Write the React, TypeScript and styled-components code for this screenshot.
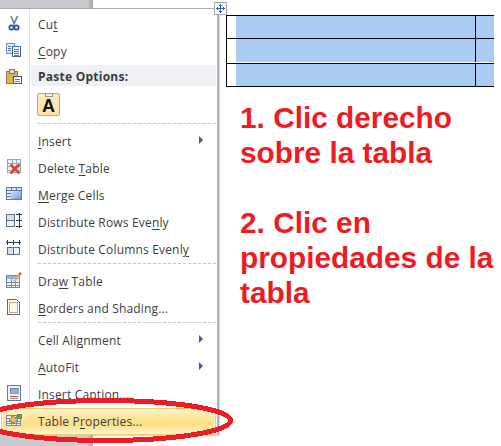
import React from "react";
import styled, { createGlobalStyle } from "styled-components";

const Global = createGlobalStyle`
  html, body { margin: 0; padding: 0; background: #fff; }
`;

const Page = styled.div`
  position: relative;
  display: flex;
  width: 501px;
  height: 446px;
  overflow: hidden;
  background: #fff;
`;

const LeftColumn = styled.div`
  display: flex;
  flex-direction: column;
  width: 220px;
  flex: none;
`;

const WindowStrip = styled.div<{ $h: number }>`
  width: 93px;
  height: ${(p) => p.$h}px;
  flex: none;
  background: linear-gradient(90deg, #c9cbcf 0%, #c9cbcf 94%, #a3a6ab 100%);
`;

const Menu = styled.div`
  flex: none;
  height: 427px;
  box-sizing: border-box;
  width: 219px;
  padding: 2px 1px 0 0;
  background: linear-gradient(90deg, #fff 29px, #e2e3e3 29px, #e2e3e3 30px, #fff 30px);
  border-top: 1px solid #a9abb0;
  border-right: 2px solid #b3b4bb;
  border-bottom: 1px solid #c5c6cb;
  box-shadow: 1px 1px 1px rgba(0, 0, 0, 0.14);
  font-family: "Open Sans", "Noto Sans", sans-serif;
  font-size: 12px;
  color: #3c3c42;
`;

const Row = styled.div<{ $hot?: boolean }>`
  display: grid;
  grid-template-columns: ${(p) => (p.$hot ? "36px" : "38px")} 1fr 17px;
  align-items: center;
  height: 27px;
  box-sizing: border-box;
  ${(p) =>
    p.$hot
      ? `
    border: 1px solid #f2ce73;
    box-shadow: inset 0 0 0 1px #fff3c8;
    background: linear-gradient(180deg, #fdf1c6 0%, #fce596 40%, #fbdf86 62%, #fef4cd 100%);
    margin-left: 1px;
  `
      : ""}
`;

const IconSlot = styled.span<{ $hot?: boolean }>`
  display: flex;
  padding-left: ${(p) => (p.$hot ? 4 : 6)}px;
  margin-bottom: 4px;
`;

const Label = styled.span`
  white-space: nowrap;
  letter-spacing: 0.17px;
  u { text-underline-offset: 2px; text-decoration-thickness: 1px; }
`;

const SubArrow = styled.span`
  justify-self: start;
  width: 0;
  height: 0;
  margin-bottom: 3px;
  border-left: 4px solid #3e5a98;
  border-top: 4px solid transparent;
  border-bottom: 4px solid transparent;
`;

const HeaderRow = styled.div`
  display: grid;
  grid-template-columns: 31px 1fr;
  height: 21px;
  align-items: center;
`;

const HeaderIcon = styled.span`
  display: flex;
  padding: 3px 0 0 6px;
`;

const HeaderBand = styled.div`
  display: flex;
  align-items: center;
  height: 21px;
  box-sizing: border-box;
  padding: 1px 0 0 7px;
  background: #eff0f3;
  font-weight: 700;
  color: #3a3a40;
  letter-spacing: 0.25px;
`;

const PasteRow = styled.div`
  height: 37px;
  padding: 7px 0 0 37px;
  box-sizing: border-box;
`;

const PasteButton = styled.div`
  position: relative;
  width: 23px;
  height: 23px;
  box-sizing: border-box;
  display: flex;
  align-items: center;
  justify-content: center;
  padding-top: 3px;
  background: linear-gradient(180deg, #fdeac4, #fddfa6);
  border: 1px solid #c3a77c;
  border-radius: 2px;
  font-family: "Liberation Sans", sans-serif;
  font-weight: 700;
  font-size: 18px;
  color: #111;
  &::before {
    content: "";
    position: absolute;
    top: -1px;
    left: 7px;
    width: 6px;
    height: 2px;
    background: #f4f1ea;
    border: 1px solid #a59a88;
  }
`;

const Separator = styled.div`
  height: 5px;
  margin-left: 38px;
  display: flex;
  align-items: flex-start;
  &::after {
    content: "";
    width: 100%;
    border-top: 1px dashed #c4c5c9;
  }
`;

const RightColumn = styled.div`
  display: flex;
  flex-direction: column;
  padding: 15px 0 0 6px;
`;

const Table = styled.div`
  width: 268px;
  border-top: 1px solid #000;
  border-left: 1px solid #000;
  box-sizing: border-box;
`;

const TableRow = styled.div<{ $h: number; $gap?: boolean }>`
  display: flex;
  height: ${(p) => p.$h}px;
  padding: 0 0 ${(p) => (p.$gap ? 1 : 0)}px 9px;
  border-bottom: 1px solid #000;
`;

const MainCell = styled.div`
  width: 239px;
  background: #a9cdf2;
  border-right: 1px solid #000;
`;

const SideCell = styled.div`
  flex: 1;
  background: #a9cdf2;
`;

const Notes = styled.div`
  margin: 13px 0 0 14px;
  font-family: "Liberation Sans", Arial, sans-serif;
  font-weight: 700;
  font-size: 29.8px;
  line-height: 35px;
  color: #ed1c24;
  white-space: nowrap;
`;

const Note = styled.p`
  margin: 0 0 35px;
`;

const MoveHandle = styled.div`
  position: absolute;
  left: 214px;
  top: 2px;
  width: 11px;
  height: 11px;
  background: #fff;
  border: 1px solid #a8a8a8;
  display: flex;
  align-items: center;
  justify-content: center;
`;

const Circle = styled.svg`
  position: absolute;
  left: 0;
  top: 390px;
  pointer-events: none;
`;

const Ico = ({ children }: { children: React.ReactNode }) => (
  <svg width="16" height="16" viewBox="0 0 16 16" shapeRendering="crispEdges">
    {children}
  </svg>
);

const Scissors = () => (
  <Ico>
    <path d="M5 1l3.4 8.5M11.5 1L7.5 9.5" stroke="#7c8aa5" strokeWidth="1.8" fill="none" shapeRendering="auto" />
    <circle cx="5.5" cy="12.5" r="2.2" fill="none" stroke="#2a4fa5" strokeWidth="1.7" shapeRendering="auto" />
    <circle cx="10.5" cy="12.5" r="2.2" fill="none" stroke="#2a4fa5" strokeWidth="1.7" shapeRendering="auto" />
  </Ico>
);

const Copy = () => (
  <Ico>
    <rect x="0.5" y="1.5" width="8" height="10" fill="#dfeaf8" stroke="#6d8fc4" />
    <rect x="6.5" y="4.5" width="8" height="10" fill="#f3f7fd" stroke="#3f68ad" />
    <path d="M8 7h5M8 9h5M8 11h5M8 13h5M2 4h3M2 6h3M2 8h3" stroke="#4f78b8" />
  </Ico>
);

const Paste = () => (
  <Ico>
    <rect x="0.5" y="2.5" width="11" height="12" fill="#e2b24f" stroke="#9a7a3a" />
    <rect x="3.5" y="0.5" width="5" height="4" fill="#d9d9d9" stroke="#77766f" />
    <rect x="7.5" y="7.5" width="8" height="7" fill="#fff" stroke="#52565e" />
    <path d="M9 10h5M9 12h5" stroke="#6a7a90" />
  </Ico>
);

const GridLines = ({ x = 0, y = 0, w = 14, h = 14, c = "#9aa5b5", cols = 3, rows = 4 }) => (
  <g>
    <rect x={x + 0.5} y={y + 0.5} width={w - 1} height={h - 1} fill="#eef1f5" stroke={c} />
    {Array.from({ length: cols - 1 }).map((_, i) => (
      <path key={"c" + i} d={`M${x + Math.round(((i + 1) * w) / cols) + 0.5} ${y}v${h}`} stroke={c} />
    ))}
    {Array.from({ length: rows - 1 }).map((_, i) => (
      <path key={"r" + i} d={`M${x} ${y + Math.round(((i + 1) * h) / rows) + 0.5}h${w}`} stroke={c} />
    ))}
  </g>
);

const DeleteTable = () => (
  <Ico>
    <GridLines x={1} y={0} w={14} h={14} />
    <path d="M4.5 5.5l9 9M13.5 5.5l-9 9" stroke="#e0452f" strokeWidth="2.6" shapeRendering="auto" />
  </Ico>
);

const Merge = () => (
  <svg width="16" height="16" viewBox="0 0 16 16" shapeRendering="crispEdges">
    <defs>
      <linearGradient id="mg" x1="0" y1="0" x2="1" y2="1">
        <stop offset="0" stopColor="#cfe1fb" />
        <stop offset="1" stopColor="#6f9fe8" />
      </linearGradient>
    </defs>
    <rect x="0.5" y="1.5" width="15" height="12" fill="#dfe6ef" stroke="#5f7c9f" />
    <path d="M0 4.5h16M5.5 2v2M10.5 2v2" stroke="#5f7c9f" />
    <path d="M0.5 7.5h4M0.5 10.5h4" stroke="#5f7c9f" />
    <rect x="5" y="5" width="10" height="8" fill="url(#mg)" />
  </svg>
);

const DistRows = () => (
  <Ico>
    <rect x="0.5" y="1.5" width="8" height="6" fill="#d5dde8" stroke="#5f6f88" />
    <rect x="0.5" y="7.5" width="8" height="6" fill="#eef1f6" stroke="#5f6f88" />
    <path d="M13 0v15M10 1.5h6M10 7.5h6M10 13.5h6" stroke="#23387a" />
  </Ico>
);

const DistCols = () => (
  <Ico>
    <path d="M0 2.5h15M1.5 0v5M7.5 0v5M13.5 0v5" stroke="#23387a" />
    <rect x="1.5" y="7.5" width="6" height="7" fill="#d5dde8" stroke="#5f6f88" />
    <rect x="7.5" y="7.5" width="6" height="7" fill="#eef1f6" stroke="#5f6f88" />
  </Ico>
);

const DrawTable = () => (
  <Ico>
    <GridLines x={0} y={3} w={14} h={13} c="#6b8bb5" />
    <rect x="1" y="4" width="12" height="3" fill="#8fb4e4" />
    <path d="M8 10l6-8" stroke="#e6b65c" strokeWidth="2.4" shapeRendering="auto" />
    <path d="M13 3l2-2.2" stroke="#d9553a" strokeWidth="2.4" shapeRendering="auto" />
  </Ico>
);

const Borders = () => (
  <Ico>
    <path d="M1.5 0.5h9l3 3v12h-12z" fill="#fdfdfd" stroke="#4f6d95" />
    <rect x="3.5" y="3.5" width="8" height="10" fill="#fdf7ea" stroke="#d9a35a" />
  </Ico>
);

const Caption = () => (
  <Ico>
    <rect x="1.5" y="0.5" width="13" height="15" fill="#eef1f5" stroke="#5f7c9f" />
    <rect x="4" y="3" width="8" height="5" fill="#8fb0d8" stroke="#556666" strokeWidth="0.6" />
    <path d="M4 11h8" stroke="#d9402f" />
    <path d="M4 13h8" stroke="#8c9db5" />
  </Ico>
);

const Properties = () => (
  <Ico>
    <GridLines x={0} y={3} w={15} h={11} c="#7a8ca5" />
    <path d="M3 8l4-4 5 4-4 3z" fill="#e8c35a" stroke="#a58a3a" />
    <rect x="11" y="2" width="5" height="5" fill="#5f9a4a" />
  </Ico>
);

const MoveIcon = () => (
  <svg width="11" height="11" viewBox="0 0 11 11" shapeRendering="crispEdges">
    <path d="M5 1h1v9H5zM1 5h9v1H1zM4 2h3v1H4zM4 8h3v1H4zM2 4h1v3H2zM8 4h1v3H8z" fill="#2b62c6" />
  </svg>
);

const Item = ({ icon, children, sub, hot }: { icon?: React.ReactNode; children: React.ReactNode; sub?: boolean; hot?: boolean }) => (
  <Row $hot={hot}>
    <IconSlot $hot={hot}>{icon}</IconSlot>
    <Label>{children}</Label>
    {sub ? <SubArrow /> : <span />}
  </Row>
);

export default function App() {
  return (
    <Page>
      <Global />
      <LeftColumn>
        <WindowStrip $h={8} />
        <Menu>
          <Item icon={<Scissors />}>Cu<u>t</u></Item>
          <Item icon={<Copy />}><u>C</u>opy</Item>
          <HeaderRow>
            <HeaderIcon><Paste /></HeaderIcon>
            <HeaderBand>Paste Options:</HeaderBand>
          </HeaderRow>
          <PasteRow>
            <PasteButton>A</PasteButton>
          </PasteRow>
          <Separator />
          <Item sub><u>I</u>nsert</Item>
          <Item icon={<DeleteTable />}>Delete <u>T</u>able</Item>
          <Item icon={<Merge />}><u>M</u>erge Cells</Item>
          <Item icon={<DistRows />}>Distribute Rows Eve<u>n</u>ly</Item>
          <Item icon={<DistCols />}>Distribute Columns Evenl<u>y</u></Item>
          <Separator />
          <Item icon={<DrawTable />}>Dra<u>w</u> Table</Item>
          <Item icon={<Borders />}><u>B</u>orders and Shading...</Item>
          <Separator />
          <Item sub>Cell Ali<u>g</u>nment</Item>
          <Item sub><u>A</u>utoFit</Item>
          <Item icon={<Caption />}>Insert Capt<u>i</u>on...</Item>
          <Item hot icon={<Properties />}>Table P<u>r</u>operties...</Item>
        </Menu>
        <WindowStrip $h={11} />
      </LeftColumn>
      <RightColumn>
        <Table>
          <TableRow $h={22}>
            <MainCell />
            <SideCell />
          </TableRow>
          <TableRow $h={23} $gap>
            <MainCell />
            <SideCell />
          </TableRow>
          <TableRow $h={22}>
            <MainCell />
            <SideCell />
          </TableRow>
        </Table>
        <Notes>
          <Note>1. Clic derecho<br />sobre la tabla</Note>
          <Note>2. Clic en<br />propiedades de la<br />tabla</Note>
        </Notes>
      </RightColumn>
      <MoveHandle><MoveIcon /></MoveHandle>
      <Circle width="240" height="56" viewBox="0 390 240 56" shapeRendering="crispEdges">
        <ellipse cx="105" cy="420.5" rx="125.5" ry="20" fill="none" stroke="#ed1c24" strokeWidth="5" />
      </Circle>
    </Page>
  );
}
